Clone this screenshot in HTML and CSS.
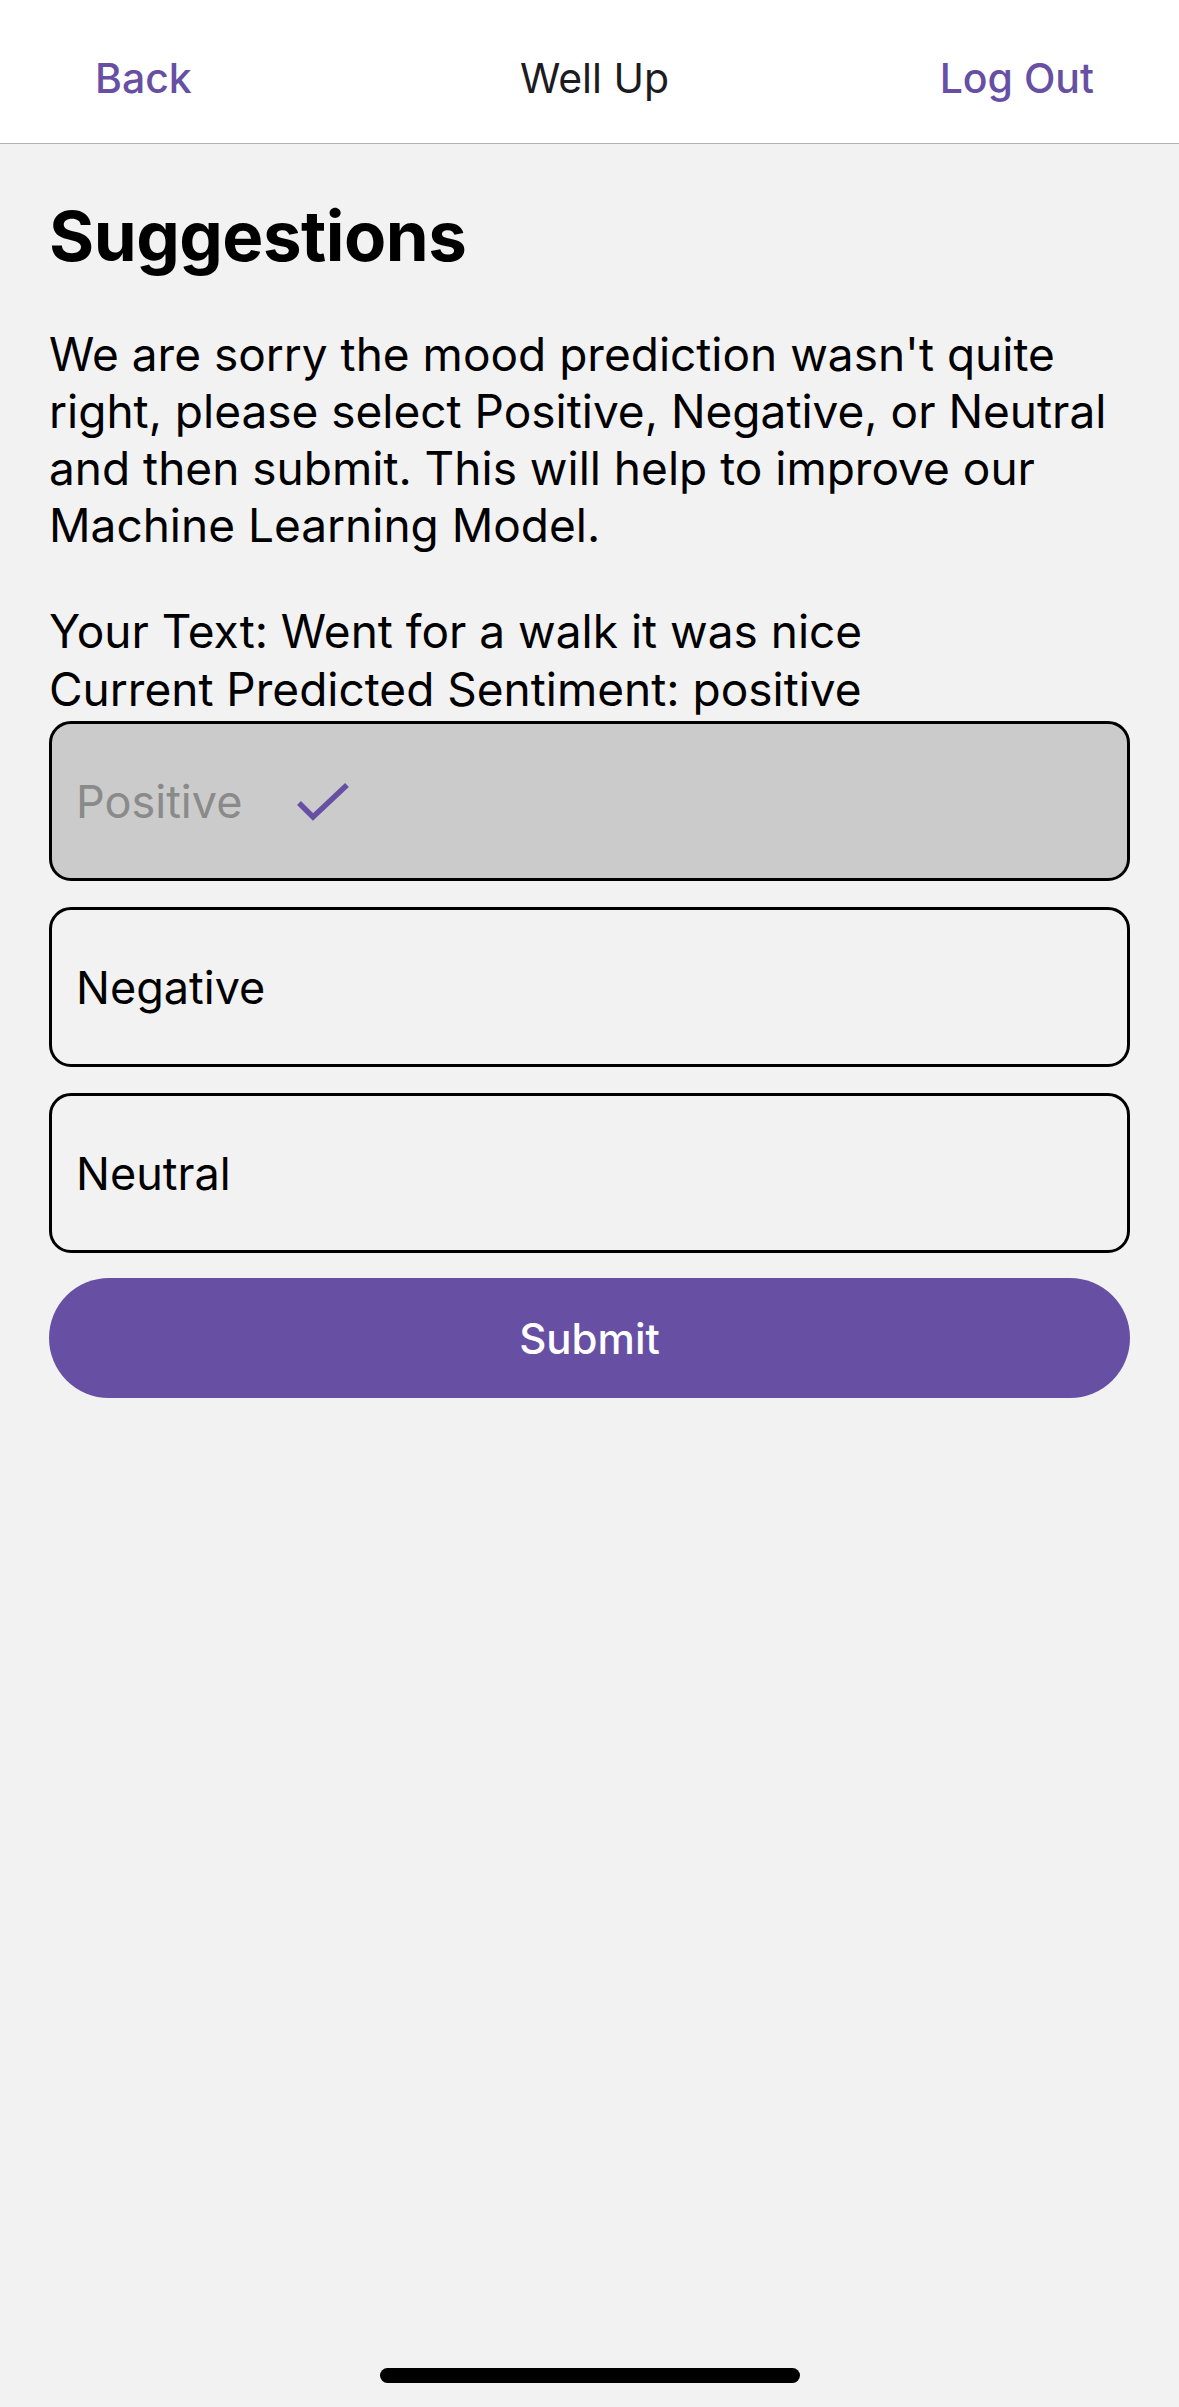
FILE: index.html
```html
<!DOCTYPE html>
<html lang="en">
<head>
<meta charset="utf-8">
<title>Well Up</title>
<link rel="stylesheet" href="styles.css">
</head>
<body>
<div class="screen">
  <header class="navbar">
    <a class="nav-link nav-left">Back</a>
    <span class="nav-title">Well Up</span>
    <a class="nav-link nav-right">Log Out</a>
  </header>
  <main class="content">
    <h1 class="heading">Suggestions</h1>
    <p class="intro">We are sorry the mood prediction wasn't quite right, please select Positive, Negative, or Neutral and then submit. This will help to improve our Machine Learning Model.</p>
    <div class="info">
      <div>Your Text: Went for a walk it was nice</div>
      <div>Current Predicted Sentiment: positive</div>
    </div>
    <div class="options">
      <div class="option selected">
        <span>Positive</span>
        <svg class="check" width="54" height="40" viewBox="0 0 54 40"><path d="M3 22 L17 36 L51 4" fill="none" stroke="#6750A4" stroke-width="5.5"/></svg>
      </div>
      <div class="option"><span>Negative</span></div>
      <div class="option"><span>Neutral</span></div>
    </div>
    <button class="submit">Submit</button>
  </main>
  <div class="home-bar"></div>
</div>
</body>
</html>
```
FILE: styles.css
```css
html, body {
  margin: 0;
  padding: 0;
}
body {
  background: #f2f2f2;
  font-family: Inter, "Noto Sans", sans-serif;
  color: #000;
}
.screen {
  width: 1179px;
  height: 2407px;
  display: flex;
  flex-direction: column;
  background: #f2f2f2;
}
.navbar {
  height: 131px;
  padding: 12px 85px 0 95px;
  background: #fff;
  border-bottom: 1px solid #b3b3b3;
  display: grid;
  grid-template-columns: 1fr auto 1fr;
  align-items: center;
  font-size: 41px;
}
.nav-link {
  color: #6750a4;
  font-weight: 500;
}
.nav-left {
  justify-self: start;
}
.nav-right {
  justify-self: end;
}
.nav-title {
  color: #1c1b1f;
}
.content {
  flex: 1;
  padding: 0 49px;
  display: flex;
  flex-direction: column;
}
.heading {
  margin: 50px 0 0;
  font-size: 69px;
  line-height: 84px;
  font-weight: 700;
  letter-spacing: -0.5px;
}
.intro {
  margin: 48px 0 0;
  font-size: 46px;
  line-height: 57px;
}
.info {
  margin-top: 48px;
  font-size: 46px;
  line-height: 58px;
}
.options {
  margin-top: 3px;
  display: flex;
  flex-direction: column;
  gap: 26px;
}
.option {
  height: 160px;
  box-sizing: border-box;
  border: 3px solid #000;
  border-radius: 22px;
  display: flex;
  align-items: center;
  padding-left: 24px;
  font-size: 45px;
}
.option.selected {
  background: #cbcbcb;
  color: #8a8a8a;
}
.check {
  margin-left: 54px;
}
.submit {
  margin-top: 25px;
  height: 120px;
  border: none;
  border-radius: 60px;
  background: #6750a4;
  color: #fff;
  font-family: Inter, "Noto Sans", sans-serif;
  font-size: 42px;
  font-weight: 500;
}
.home-bar {
  align-self: center;
  width: 420px;
  height: 15px;
  border-radius: 8px;
  background: #000;
  margin-bottom: 24px;
}
```
